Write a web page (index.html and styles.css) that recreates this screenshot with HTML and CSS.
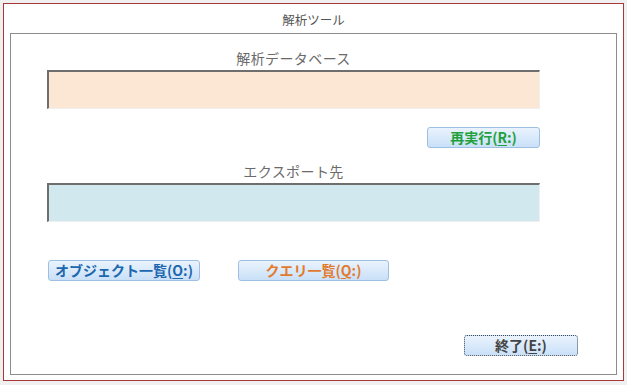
FILE: index.html
```html
<!DOCTYPE html>
<html lang="ja">
<head>
  <meta charset="UTF-8" />
  <title>解析ツール</title>
  <link rel="stylesheet" href="styles.css">
</head>
<body>

<div class="window">
  <div class="window-title">解析ツール</div>

  <div class="group">
    <div class="field-label">解析データベース</div>
    <div class="field field-db"></div>

    <div class="row row-right">
      <button class="win-btn btn-rerun">再実行(<u>R</u>:)</button>
    </div>

    <div class="field-label label-export">エクスポート先</div>
    <div class="field field-export"></div>

    <div class="row row-lists">
      <button class="win-btn btn-objects">オブジェクト一覧(<u>O</u>:)</button>
      <button class="win-btn btn-queries">クエリ一覧(<u>Q</u>:)</button>
    </div>

    <div class="row row-close">
      <button class="win-btn btn-close">終了(<u>E</u>:)</button>
    </div>
  </div>
</div>

</body>
</html>
```

FILE: styles.css
```css
* { box-sizing: border-box; }

body {
  margin: 0;
  background: #f0f0f0;
  font-family: "Noto Sans CJK JP", "Noto Sans", sans-serif;
}

.window {
  margin: 3px 0 0 3px;
  width: 621px;
  height: 378px;
  background: #ffffff;
  border: 1px solid #a8383c;
  padding: 0 6px 5px 6px;
  display: flex;
  flex-direction: column;
}

.window-title {
  height: 29px;
  line-height: 28px;
  padding-top: 2px;
  text-align: center;
  font-size: 12.5px;
  color: #555;
}

.group {
  flex: 1;
  border: 1px solid #8c8c8c;
  padding: 0 0 0 36px;
  display: flex;
  flex-direction: column;
}

.field-label {
  width: 493px;
  margin-top: 15px;
  height: 18px;
  line-height: 18px;
  text-align: center;
  font-size: 14px;
  letter-spacing: 0.4px;
  color: #6a6a6a;
}

.label-export {
  margin-top: 14px;
}

.field {
  width: 493px;
  height: 39px;
  margin-top: 3px;
  border-top: 2px solid #6e6e6e;
  border-left: 2px solid #6e6e6e;
  border-right: 1px solid #efefef;
  border-bottom: 1px solid #efefef;
}

.field-db {
  background: #fce6d4;
}

.field-export {
  background: #d1e9ee;
}

.row {
  display: flex;
}

.row-right {
  width: 493px;
  justify-content: flex-end;
  margin-top: 18px;
}

.row-lists {
  margin-top: 38px;
  padding-left: 1px;
  gap: 38px;
}

.row-close {
  margin-top: 54px;
  padding-left: 417px;
}

.win-btn {
  height: 21px;
  padding: 0;
  font-family: inherit;
  font-size: 14px;
  font-weight: bold;
  line-height: 17px;
  border: 1px solid #9dbfe2;
  border-radius: 3px;
  background: linear-gradient(#eaf3fd, #c9e0f8);
  cursor: pointer;
}

.win-btn u {
  text-underline-offset: 2px;
}

.btn-rerun {
  width: 113px;
  color: #22a03c;
}

.btn-objects {
  width: 152px;
  color: #1c67ad;
}

.btn-queries {
  width: 151px;
  color: #e27b2e;
}

.btn-close {
  width: 114px;
  color: #444;
  border: 1px dotted #3c4a5a;
  border-radius: 3px;
}
```
